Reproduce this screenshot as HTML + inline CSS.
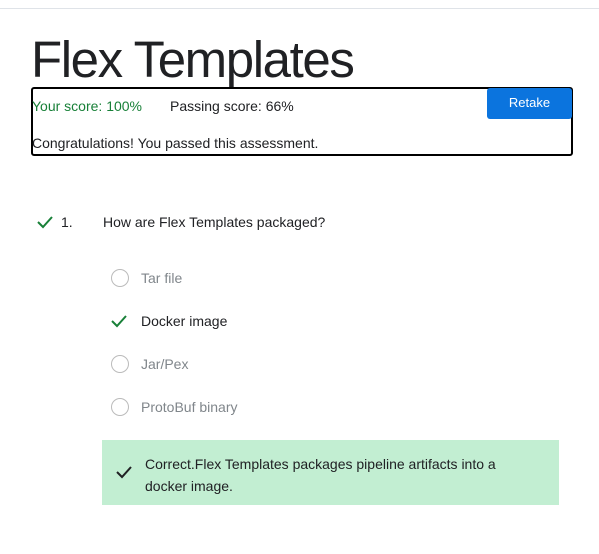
<!DOCTYPE html>
<html><head><style>
body{margin:0;width:599px;height:554px;background:#fff;font-family:"Liberation Sans",Arial,sans-serif;position:relative;overflow:hidden;color:#202124}
.a{position:absolute;white-space:nowrap}
</style></head><body>
<div class="a" style="left:0;top:8px;width:599px;height:1px;background:#dfe3e8"></div>
<div class="a" style="left:31px;top:30px;font-size:51px;color:#202124;letter-spacing:-1.4px">Flex Templates</div>
<div class="a" style="left:31px;top:87px;width:538px;height:65px;border:2px solid #000;border-radius:3px"></div>
<div class="a" style="left:32px;top:98px;font-size:14px;color:#188038">Your score: 100%</div>
<div class="a" style="left:170px;top:98px;font-size:14px">Passing score: 66%</div>
<div class="a" style="left:487px;top:88px;width:85px;height:31px;background:#0b74de;border-radius:3px;color:#fff;font-size:13px;text-align:center;line-height:29px">Retake</div>
<div class="a" style="left:32px;top:135px;font-size:14px">Congratulations! You passed this assessment.</div>
<svg class="a" style="left:36px;top:214px" width="18" height="16"><path d="M2 8 L7 13 L16 3" stroke="#188038" stroke-width="2" fill="none"/></svg>
<div class="a" style="left:61px;top:214px;font-size:14px">1.</div>
<div class="a" style="left:103px;top:214px;font-size:14px">How are Flex Templates packaged?</div>
<div class="a" style="left:111px;top:269px;width:16px;height:16px;border:1px solid #bbb;border-radius:50%"></div>
<div class="a" style="left:141px;top:270px;font-size:14px;color:#80868b">Tar file</div>
<svg class="a" style="left:110px;top:314px" width="18" height="14"><path d="M2 7 L7 12 L16 2" stroke="#188038" stroke-width="2" fill="none"/></svg>
<div class="a" style="left:141px;top:313px;font-size:14px">Docker image</div>
<div class="a" style="left:111px;top:355px;width:16px;height:16px;border:1px solid #bbb;border-radius:50%"></div>
<div class="a" style="left:141px;top:356px;font-size:14px;color:#80868b">Jar/Pex</div>
<div class="a" style="left:111px;top:398px;width:16px;height:16px;border:1px solid #bbb;border-radius:50%"></div>
<div class="a" style="left:141px;top:399px;font-size:14px;color:#80868b">ProtoBuf binary</div>
<div class="a" style="left:102px;top:440px;width:457px;height:65px;background:#c2eed2"></div>
<svg class="a" style="left:115px;top:465px" width="18" height="14"><path d="M2 7 L7 12 L16 2" stroke="#202124" stroke-width="2" fill="none"/></svg>
<div class="a" style="left:145px;top:453px;font-size:14px;line-height:22px;white-space:normal;width:375px">Correct.Flex Templates packages pipeline artifacts into a docker image.</div>
</body></html>
